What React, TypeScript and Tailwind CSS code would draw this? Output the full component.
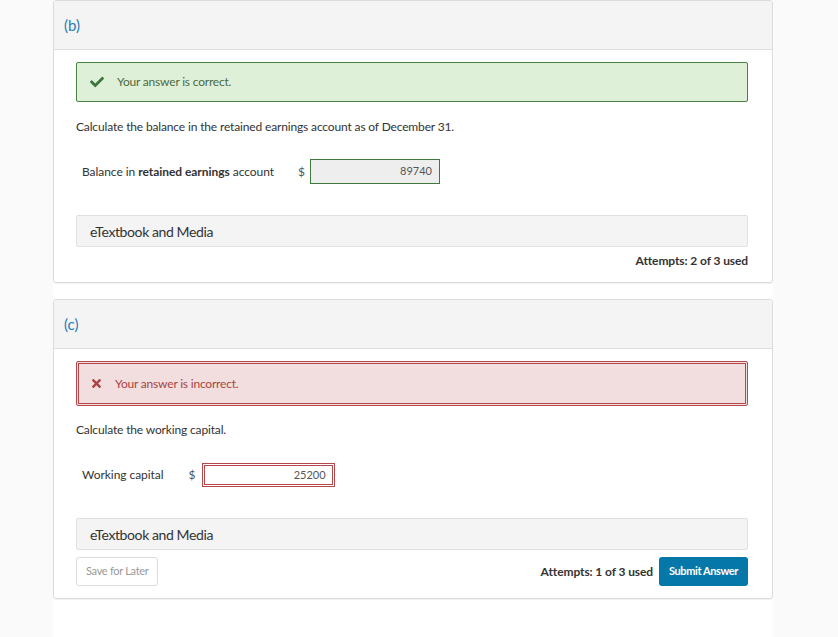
import React from 'react';
import { FaCheck, FaTimes } from 'react-icons/fa';

const font = { fontFamily: 'Lato, "Open Sans", Arial, sans-serif' };

function Header({ label }: { label: string }) {
  return (
    <div className="h-[49px] flex items-center pl-[10px] bg-[#f4f4f4] border-b border-[#dedede] rounded-t-[3px]">
      <span className="text-[15px] text-[#2a7bb5]">{label}</span>
    </div>
  );
}

function MediaBar() {
  return (
    <div className="h-[32px] flex items-center pl-[13px] bg-[#f4f4f4] border border-[#e0e0e0] rounded-[2px] text-[14px] text-[#333] tracking-[-0.4px]">
      eTextbook and Media
    </div>
  );
}

export default function App() {
  return (
    <div className="min-h-screen bg-[#fafafa]" style={font}>
      <div className="ml-[53px] w-[720px] min-h-screen bg-white">
        {/* part b */}
        <div className="border border-[#dcdcdc] rounded-[3px] shadow-[0_1px_1px_rgba(0,0,0,0.06)]">
          <Header label="(b)" />
          <div className="pl-[22px] pr-[24px] pt-[12px] pb-[12px]">
            <div className="h-[40px] flex items-center bg-[#dff0d8] border border-[#4a7f45] rounded-[2px] pl-[13px]">
              <FaCheck className="text-[#3c763d] w-[14px] h-[14px]" />
              <span className="ml-[13px] text-[12px] text-[#4b6a45] tracking-[-0.2px]">Your answer is correct.</span>
            </div>
            <p className="mt-[18px] text-[12px] text-[#333] tracking-[-0.15px] leading-[14px]">
              Calculate the balance in the retained earnings account as of December 31.
            </p>
            <div className="mt-[25px] flex items-center pl-[6px]">
              <span className="text-[12px] text-[#333] tracking-[-0.05px]">
                Balance in <span className="font-bold">retained earnings</span> account
              </span>
              <span className="ml-[24px] text-[12px] text-[#555]">$</span>
              <div className="ml-[5px] w-[130px] h-[25px] bg-[#eee] border border-[#3f7a3c] flex items-center justify-end pr-[7px] text-[11px] text-[#555]">
                89740
              </div>
            </div>
            <div className="mt-[31px]">
              <MediaBar />
            </div>
            <div className="mt-[5px] text-right text-[12px] font-bold text-[#333] tracking-[-0.1px]">
              Attempts: 2 of 3 used
            </div>
          </div>
        </div>

        {/* part c */}
        <div className="mt-[16px] border border-[#dcdcdc] rounded-[3px] shadow-[0_1px_1px_rgba(0,0,0,0.06)]">
          <Header label="(c)" />
          <div className="pl-[22px] pr-[24px] pt-[12px] pb-[12px]">
            <div className="h-[45px] flex items-center bg-[#f2dede] border-[3px] border-double border-[#b5484a] rounded-[2px] pl-[11px]">
              <FaTimes className="text-[#a94442] w-[13px] h-[13px]" />
              <span className="ml-[12px] text-[12px] text-[#a94442] tracking-[-0.2px]">Your answer is incorrect.</span>
            </div>
            <p className="mt-[17px] text-[12px] text-[#333] tracking-[-0.15px] leading-[14px]">
              Calculate the working capital.
            </p>
            <div className="mt-[26px] flex items-center pl-[6px]">
              <span className="text-[12px] text-[#333] tracking-[-0.05px]">Working capital</span>
              <span className="ml-[25px] text-[12px] text-[#555]">$</span>
              <div className="ml-[6px] w-[133px] h-[24px] bg-white border-[3px] border-double border-[#b5484a] flex items-center justify-end pr-[6px] text-[11px] text-[#555]">
                25200
              </div>
            </div>
            <div className="mt-[31px]">
              <MediaBar />
            </div>
            <div className="mt-[7px] flex items-center">
              <button className="h-[29px] px-[9px] bg-white border border-[#dcdcdc] rounded-[3px] text-[11px] text-[#999] tracking-[-0.3px]">
                Save for Later
              </button>
              <span className="ml-auto text-[12px] font-bold text-[#333] tracking-[-0.1px]">Attempts: 1 of 3 used</span>
              <button className="ml-[6px] h-[29px] px-[10px] bg-[#0677a9] rounded-[3px] text-[11px] font-bold text-white tracking-[-0.4px]">
                Submit Answer
              </button>
            </div>
          </div>
        </div>
      </div>
    </div>
  );
}
